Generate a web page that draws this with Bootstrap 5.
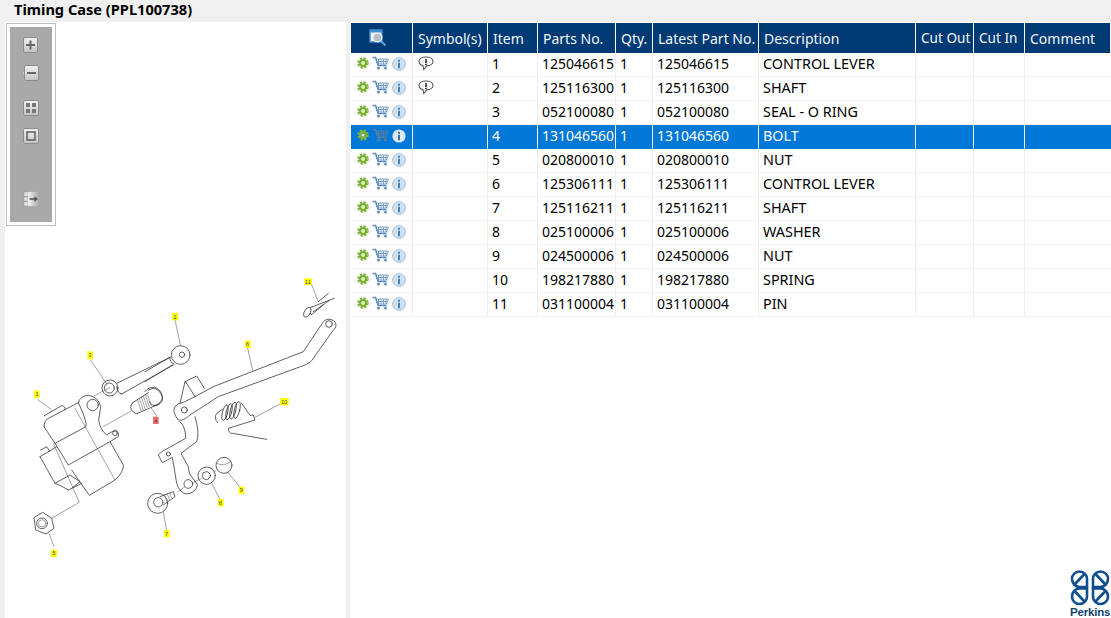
<!DOCTYPE html>
<html lang="en">
<head>
  <meta charset="UTF-8" />
  <title>Timing Case (PPL100738)</title>
  <link href="https://cdn.jsdelivr.net/npm/bootstrap@5.3.0/dist/css/bootstrap.min.css" rel="stylesheet" />
  <style>
    html, body { height: 100%; overflow: hidden; }
    body { background: #f0f0f0; font-family: "Noto Sans", "Open Sans", sans-serif; font-size: 14px; color: #000; }
    .page-wrap { width: 1111px; height: 618px; }
    .title-bar { height: 22px; line-height: 19px; padding-left: 14px; font-weight: 700; font-size: 14.6px; }
    .main-area { height: 596px; padding-left: 5px; }
    .drawing-pane { width: 341px; height: 596px; background: #fff; margin-right: 4px; position: relative; }
    .drawing-pane svg.drawing { display: block; filter: blur(.3px); }
    .zoom-tools { position: absolute; left: 1px; top: 1px; width: 50px; height: 203px; border: 1px solid #bdbdbd; background: #fff; padding: 3px; }
    .zoom-inner { background: #a9a9a9; height: 100%; padding-top: 10px; }
    .tool-btn { width: 16px; height: 16px; display: block; }
    .gap-a { margin-top: 12px; }
    .gap-b { margin-top: 19px; }
    .gap-c { margin-top: 47px; }
    .parts-pane { background: #fff; padding: 1px 0 0 1px; }
    .parts-table { table-layout: fixed; width: 760px; margin: 0; border-collapse: separate; border-spacing: 0; font-size: 14px; }
    .parts-table > thead > tr > th { --bs-table-bg: #003a75; --bs-table-color: #f2f6fa; background: #003a75; color: #f2f6fa; height: 30px; padding: 0 0 0 5px; font-weight: 400; border: 0; border-right: 1px solid #fff; vertical-align: middle; white-space: nowrap; overflow: hidden; }
    .parts-table > thead > tr > th.head-find { padding: 0 0 0 18px; }
    .parts-table > thead > tr > th.head-tight { font-size: 13.6px; }
    .parts-table > tbody > tr > td { height: 24px; padding: 0 0 2px 4px; border: 0; border-right: 1px solid #f0f0f0; border-bottom: 1px solid #f0f0f0; vertical-align: middle; white-space: nowrap; overflow: hidden; line-height: 20px; color: #000; box-shadow: none; }
    .parts-table > tbody > tr.row-sel > td { --bs-table-bg: #0078d7; background: #0078d7; color: #fff; border-right-color: #fff; border-bottom-color: #0078d7; }
    .parts-table > tbody > tr > th:last-child, .parts-table > tbody > tr > td:last-child { border-right: 0; }
    .parts-table > tbody > tr > td.cell-icons { padding: 0 0 1px 6px; line-height: 0; color: #5b8dba; }
    .parts-table > tbody > tr.row-sel > td.cell-icons { color: #5d7ea2; }
    .cell-icons svg { display: inline-block; vertical-align: top; }
    .cell-icons .ic-cart { margin: -1px 3px 0 3px; }
    .parts-table > tbody > tr > td.cell-sym { padding: 3px 0 0 5px; vertical-align: top; line-height: 0; }
    .parts-table > tbody > tr > td.cell-desc { font-size: 14.4px; }
    .brand-logo { width: 42px; height: 49px; margin: 0 0 0 auto; }
    .brand-name { font-family: "Liberation Sans", Arial, sans-serif; font-weight: 700; font-size: 11.5px; letter-spacing: -.2px; fill: #123f73; }
    .ln { fill: none; stroke: #3a3a3a; stroke-width: 2.4; stroke-linejoin: round; stroke-linecap: round; }
    .fine { fill: none; stroke: #555; stroke-width: 1.6; }
    .ld { fill: none; stroke: #8a8a8a; stroke-width: 2.4; }
    .tag { fill: #ffff00; }
    .tag-sel { fill: #ee6d6d; }
    .tag-txt { font-family: "Liberation Sans", Arial, sans-serif; font-size: 17px; fill: #444; text-anchor: middle; }
  </style>
</head>
<body>
  <svg width="0" height="0" class="position-absolute">
    <symbol id="ic-gear" viewBox="0 0 12 12">
      <circle cx="6" cy="6" r="4.7" fill="none" stroke="#7cb23c" stroke-width="2.2" stroke-dasharray="2.2 1.5"/>
      <circle cx="6" cy="6" r="3" fill="none" stroke="#7cb23c" stroke-width="2.6"/>
      <circle cx="6" cy="6" r="1.6" fill="#dbe9c6"/>
    </symbol>
    <symbol id="ic-cart" viewBox="0 0 17 14">
      <path d="M.5 1.5H3.5L6 9.5H14.5" fill="none" stroke="currentColor" stroke-width="1.3"/>
      <path d="M4 3H16.5L14.7 8H5.6ZM6.5 3V8M9 3V8M11.5 3V8M14 3V8M4.7 5.5H15.6" fill="none" stroke="currentColor" stroke-width=".8"/>
      <circle cx="6.5" cy="12" r="1.5" fill="currentColor"/>
      <circle cx="13.5" cy="12" r="1.5" fill="currentColor"/>
    </symbol>
    <symbol id="ic-info" viewBox="0 0 14 14">
      <circle cx="7" cy="7" r="6.4" fill="#cfe0f0" stroke="#a5c0da" stroke-width="1"/>
      <rect x="6" y="2.8" width="2" height="2" fill="#4f7fb0"/>
      <rect x="6" y="5.8" width="2" height="5.4" fill="#4f7fb0"/>
    </symbol>
    <symbol id="ic-info-sel" viewBox="0 0 14 14">
      <circle cx="7" cy="7" r="6.6" fill="#dbe7f3"/>
      <rect x="6" y="2.8" width="2" height="2" fill="#3f70a3"/>
      <rect x="6" y="5.8" width="2" height="5.4" fill="#3f70a3"/>
    </symbol>
    <symbol id="ic-note" viewBox="0 0 16 15">
      <path d="M8 1C4 1 1 2.8 1 5.500C1 7.600 2.800 9.100 5 9.600L5.800 13.500L8.600 9.900C12.200 9.800 15 8 15 5.500C15 2.800 12 1 8 1Z" fill="none" stroke="#555" stroke-width="1.1"/>
      <path d="M8 3V7.200M8 8V9" stroke="#222" stroke-width="1.6"/>
    </symbol>
    <linearGradient id="btn-grad" x1="0" y1="0" x2="0" y2="1">
      <stop offset="0" stop-color="#f2f2f2"/><stop offset="1" stop-color="#c4c4c4"/>
    </linearGradient>
    <linearGradient id="side-grad" x1="0" y1="0" x2="1" y2="0">
      <stop offset="0" stop-color="#f4f4f4"/><stop offset="1" stop-color="#a9a9a9"/>
    </linearGradient>
  </svg>

  <div class="page-wrap d-flex flex-column">
    <div class="title-bar">Timing Case (PPL100738)</div>
    <div class="main-area d-flex">
      <div class="drawing-pane">
        <svg class="drawing" width="341" height="596" viewBox="5 22 341 596">
          <!-- left half, numbers are pixels of the 3x crop -->
          <g transform="translate(0,270) scale(.33333)">
            <path class="ld" d="M112 388L158 422M272 270L322 345M282 378L330 352M225 415L345 630M310 470L395 422M470 438L452 412M162 830L147 790M155 745L238 697L160 520"/>
            <path class="ln" d="M133 437L185 407Q197 408 195 420M132 470Q132 452 145 445L235 398Q240 378 265 376Q295 380 302 410L296 450Q300 480 320 495L345 480Q358 485 355 500L330 515L370 585Q372 605 345 630L268 676L215 600"/>
            <path class="ln" d="M132 470L165 520L258 470Q262 455 235 398M165 520L205 585L330 515M120 560L170 530M120 560L165 640L210 615L240 635L215 655L205 660Q190 650 165 640M122 540L140 530L150 545M215 655L245 640"/>
            <circle class="ln" cx="278" cy="405" r="17"/>
            <circle class="ln" cx="345" cy="490" r="7"/>
            <circle class="ln" cx="330" cy="354" r="24"/>
            <circle class="ln" cx="328" cy="354" r="15"/>
            <path class="ln" d="M350 340L510 262M365 372L520 285M350 350Q352 370 365 372"/>
            <path class="ln" d="M398 398L445 368M412 430L478 402M398 398Q385 412 400 426Q405 432 412 430"/>
            <path class="fine" d="M412 388L424 424M418 385L430 421M424 381L436 418M430 378L442 414M436 374L448 411M442 371L454 408"/>
            <path class="ln" d="M445 360Q470 345 485 375Q495 395 472 405Q455 410 448 395"/>
            <path class="ln" d="M103 742L128 727L155 745L162 775L138 792L108 780Z"/>
            <circle class="ln" cx="126" cy="760" r="16"/>
            <circle class="fine" cx="126" cy="760" r="11"/>
            <rect class="tag" x="102" y="361" width="16" height="23"/><text class="tag-txt" x="111" y="379">1</text>
            <rect class="tag" x="262" y="244" width="17" height="24"/><text class="tag-txt" x="270" y="262">3</text>
            <rect class="tag-sel" x="459" y="440" width="17" height="22"/><text class="tag-txt" x="468" y="458">4</text>
            <rect class="tag" x="153" y="839" width="18" height="22"/><text class="tag-txt" x="162" y="856">5</text>
          </g>
          <!-- right half -->
          <g transform="translate(145,270) scale(.33333)">
            <path class="ld" d="M90 150L107 228M308 234L323 302M330 442L405 402M500 45L520 95M55 725L65 782M200 640L226 690M247 605L285 652M100 665L120 650M140 640L170 625M205 608L215 600"/>
            <circle class="ln" cx="107" cy="255" r="28"/>
            <circle class="ln" cx="111" cy="254" r="8"/>
            <path class="ln" d="M0 305L75 262M0 335L82 285M75 262Q72 275 88 283"/>
            <path class="ln" d="M150 380L205 350L475 245L535 155Q550 140 570 155Q578 170 565 180L500 272Q492 280 480 285L220 380L135 435Q112 455 100 450Q80 425 90 410Q98 400 115 397L150 380"/>
            <path class="ln" d="M120 335L155 318L178 355M120 335L105 400M122 335L150 380"/>
            <circle class="ln" cx="118" cy="420" r="9"/>
            <circle class="ln" cx="552" cy="162" r="10"/>
            <path class="ln" d="M105 455Q122 470 122 505L50 545L40 555L52 578L82 562L95 640Q105 670 125 672Q150 670 158 645L133 610L130 590L108 550L155 515Q165 490 150 440"/>
            <circle class="ln" cx="130" cy="642" r="13"/>
            <circle class="ln" cx="70" cy="552" r="6"/>
            <circle class="ln" cx="38" cy="700" r="30"/>
            <circle class="ln" cx="40" cy="697" r="14"/>
            <path class="ln" d="M45 680L85 665L90 680L55 705"/>
            <path class="fine" d="M58 672L66 694M66 670L74 690M74 667L80 685"/>
            <circle class="ln" cx="185" cy="617" r="26"/>
            <circle class="ln" cx="184" cy="617" r="12"/>
            <circle class="ln" cx="237" cy="586" r="24"/>
            <path class="fine" d="M215 580Q235 590 258 575"/>
            <ellipse class="ln" cx="240" cy="428" rx="8" ry="24" transform="rotate(14 240 428)"/>
            <ellipse class="ln" cx="252" cy="425" rx="8" ry="25" transform="rotate(14 252 425)"/>
            <ellipse class="ln" cx="264" cy="422" rx="8" ry="26" transform="rotate(14 264 422)"/>
            <ellipse class="ln" cx="276" cy="420" rx="8" ry="26" transform="rotate(14 276 420)"/>
            <path class="ln" d="M232 418L215 430Q205 445 218 458M290 400L315 436L325 435L330 450L250 475Q250 490 262 490L365 508"/>
            <ellipse class="ln" cx="487" cy="127" rx="9" ry="16" transform="rotate(30 487 127)"/>
            <path class="ln" d="M495 113L568 85M505 125L552 92M498 135L535 105M520 95L550 70"/>
            <path class="ln" d="M0 365Q10 350 30 352Q52 360 52 385Q45 405 25 408" />
            <rect class="tag" x="81" y="129" width="19" height="22"/><text class="tag-txt" x="90" y="146">2</text>
            <rect class="tag" x="300" y="212" width="17" height="22"/><text class="tag-txt" x="308" y="229">6</text>
            <rect class="tag" x="57" y="780" width="17" height="22"/><text class="tag-txt" x="65" y="797">7</text>
            <rect class="tag" x="219" y="687" width="17" height="22"/><text class="tag-txt" x="227" y="704">8</text>
            <rect class="tag" x="281" y="650" width="17" height="22"/><text class="tag-txt" x="289" y="667">9</text>
            <rect class="tag" x="405" y="384" width="26" height="22"/><text class="tag-txt" x="418" y="401">10</text>
            <rect class="tag" x="478" y="25" width="23" height="20"/><text class="tag-txt" x="489" y="41">11</text>
          </g>
        </svg>
        <div class="zoom-tools">
          <div class="zoom-inner d-flex flex-column align-items-center">
            <svg class="tool-btn" viewBox="0 0 16 16"><rect x=".5" y=".5" width="14" height="15" rx="1.5" fill="url(#btn-grad)" stroke="#8c8c8c"/><path d="M15 7L16 8L15 9Z" fill="#ddd"/><path d="M7.500 3.500V12.500M3 8H12" stroke="#666" stroke-width="2"/></svg>
            <svg class="tool-btn gap-a" viewBox="0 0 16 16"><rect x="1.500" y=".5" width="14" height="15" rx="1.500" fill="url(#btn-grad)" stroke="#8c8c8c"/><path d="M1 7L0 8L1 9Z" fill="#ddd"/><path d="M4 8H13" stroke="#666" stroke-width="2"/></svg>
            <svg class="tool-btn gap-b" viewBox="0 0 16 16"><rect x=".5" y=".5" width="15" height="15" rx="1.500" fill="url(#btn-grad)" stroke="#8c8c8c"/><path d="M3 3H7V7H3ZM9 3H13V7H9ZM3 9H7V13H3ZM9 9H13V13H9Z" fill="#777"/></svg>
            <svg class="tool-btn gap-a" viewBox="0 0 16 16"><rect x=".5" y=".5" width="15" height="15" rx="1.500" fill="url(#btn-grad)" stroke="#8c8c8c"/><rect x="4" y="4" width="8" height="8" fill="none" stroke="#666" stroke-width="1.6"/></svg>
            <svg class="tool-btn gap-c" viewBox="0 0 17 16"><path d="M1 .5H5V15.500H1Z" fill="#e2e2e2" stroke="#999" stroke-width=".6"/><path d="M1 5.500H5M1 10.500H5" stroke="#8c8c8c"/><path d="M5 .5H17V15.500H5Z" fill="url(#side-grad)"/><path d="M7 8H13" stroke="#555" stroke-width="1.6"/><path d="M12 5L16 8L12 11Z" fill="#555"/></svg>
          </div>
        </div>
      </div>
      <div class="parts-pane flex-grow-1 d-flex flex-column">
        <table class="table parts-table">
          <colgroup>
            <col style="width:62px"><col style="width:75px"><col style="width:50px"><col style="width:78px"><col style="width:37px"><col style="width:106px"><col style="width:157px"><col style="width:58px"><col style="width:51px"><col style="width:86px">
          </colgroup>
          <thead>
            <tr>
              <th class="head-find">
                <svg class="d-block" width="18" height="18" viewBox="0 0 18 18"><rect x="1" y="1" width="12" height="12" fill="#e8f0f8" stroke="#3f8fd0" stroke-width="1.4"/><rect x="1" y="1" width="12" height="2.500" fill="#3f8fd0"/><circle cx="8.500" cy="8.500" r="4.400" fill="#b9bec4" stroke="#e9edf1" stroke-width="1.2"/><path d="M12 12L16.500 16.500" stroke="#5aa0d8" stroke-width="2.2"/></svg>
              </th>
              <th>Symbol(s)</th><th>Item</th><th>Parts No.</th><th>Qty.</th><th>Latest Part No.</th><th>Description</th><th class="head-tight">Cut Out</th><th class="head-tight">Cut In</th><th>Comment</th>
            </tr>
          </thead>
          <tbody>
            <tr><td class="cell-icons"><svg width="12" height="12"><use href="#ic-gear"/></svg><svg class="ic-cart" width="17" height="14"><use href="#ic-cart"/></svg><svg width="14" height="14"><use href="#ic-info"/></svg></td><td class="cell-sym"><svg width="16" height="15"><use href="#ic-note"/></svg></td><td>1</td><td>125046615</td><td>1</td><td>125046615</td><td class="cell-desc">CONTROL LEVER</td><td></td><td></td><td></td></tr>
            <tr><td class="cell-icons"><svg width="12" height="12"><use href="#ic-gear"/></svg><svg class="ic-cart" width="17" height="14"><use href="#ic-cart"/></svg><svg width="14" height="14"><use href="#ic-info"/></svg></td><td class="cell-sym"><svg width="16" height="15"><use href="#ic-note"/></svg></td><td>2</td><td>125116300</td><td>1</td><td>125116300</td><td class="cell-desc">SHAFT</td><td></td><td></td><td></td></tr>
            <tr><td class="cell-icons"><svg width="12" height="12"><use href="#ic-gear"/></svg><svg class="ic-cart" width="17" height="14"><use href="#ic-cart"/></svg><svg width="14" height="14"><use href="#ic-info"/></svg></td><td></td><td>3</td><td>052100080</td><td>1</td><td>052100080</td><td class="cell-desc">SEAL - O RING</td><td></td><td></td><td></td></tr>
            <tr class="row-sel"><td class="cell-icons"><svg width="12" height="12"><use href="#ic-gear"/></svg><svg class="ic-cart" width="17" height="14"><use href="#ic-cart"/></svg><svg width="14" height="14"><use href="#ic-info-sel"/></svg></td><td></td><td>4</td><td>131046560</td><td>1</td><td>131046560</td><td class="cell-desc">BOLT</td><td></td><td></td><td></td></tr>
            <tr><td class="cell-icons"><svg width="12" height="12"><use href="#ic-gear"/></svg><svg class="ic-cart" width="17" height="14"><use href="#ic-cart"/></svg><svg width="14" height="14"><use href="#ic-info"/></svg></td><td></td><td>5</td><td>020800010</td><td>1</td><td>020800010</td><td class="cell-desc">NUT</td><td></td><td></td><td></td></tr>
            <tr><td class="cell-icons"><svg width="12" height="12"><use href="#ic-gear"/></svg><svg class="ic-cart" width="17" height="14"><use href="#ic-cart"/></svg><svg width="14" height="14"><use href="#ic-info"/></svg></td><td></td><td>6</td><td>125306111</td><td>1</td><td>125306111</td><td class="cell-desc">CONTROL LEVER</td><td></td><td></td><td></td></tr>
            <tr><td class="cell-icons"><svg width="12" height="12"><use href="#ic-gear"/></svg><svg class="ic-cart" width="17" height="14"><use href="#ic-cart"/></svg><svg width="14" height="14"><use href="#ic-info"/></svg></td><td></td><td>7</td><td>125116211</td><td>1</td><td>125116211</td><td class="cell-desc">SHAFT</td><td></td><td></td><td></td></tr>
            <tr><td class="cell-icons"><svg width="12" height="12"><use href="#ic-gear"/></svg><svg class="ic-cart" width="17" height="14"><use href="#ic-cart"/></svg><svg width="14" height="14"><use href="#ic-info"/></svg></td><td></td><td>8</td><td>025100006</td><td>1</td><td>025100006</td><td class="cell-desc">WASHER</td><td></td><td></td><td></td></tr>
            <tr><td class="cell-icons"><svg width="12" height="12"><use href="#ic-gear"/></svg><svg class="ic-cart" width="17" height="14"><use href="#ic-cart"/></svg><svg width="14" height="14"><use href="#ic-info"/></svg></td><td></td><td>9</td><td>024500006</td><td>1</td><td>024500006</td><td class="cell-desc">NUT</td><td></td><td></td><td></td></tr>
            <tr><td class="cell-icons"><svg width="12" height="12"><use href="#ic-gear"/></svg><svg class="ic-cart" width="17" height="14"><use href="#ic-cart"/></svg><svg width="14" height="14"><use href="#ic-info"/></svg></td><td></td><td>10</td><td>198217880</td><td>1</td><td>198217880</td><td class="cell-desc">SPRING</td><td></td><td></td><td></td></tr>
            <tr><td class="cell-icons"><svg width="12" height="12"><use href="#ic-gear"/></svg><svg class="ic-cart" width="17" height="14"><use href="#ic-cart"/></svg><svg width="14" height="14"><use href="#ic-info"/></svg></td><td></td><td>11</td><td>031100004</td><td>1</td><td>031100004</td><td class="cell-desc">PIN</td><td></td><td></td><td></td></tr>
          </tbody>
        </table>
        <svg class="brand-logo mt-auto flex-shrink-0" viewBox="0 0 42 49">
          <g fill="none" stroke="#0f4f8f" stroke-width="2.6">
            <g id="logo-lobe"><path d="M18 18V10A7.500 7.500 0 0 0 10.500 2.500A7.500 7.500 0 0 0 3 10A8 8 0 0 0 10.500 18Z"/><path d="M6 15L15.500 5"/></g>
            <use href="#logo-lobe" transform="matrix(-1 0 0 1 42 0)"/>
            <use href="#logo-lobe" transform="matrix(1 0 0 -1 0 37.500)"/>
            <use href="#logo-lobe" transform="matrix(-1 0 0 -1 42 37.500)"/>
          </g>
          <text class="brand-name" x="1" y="47">Perkins</text>
        </svg>
      </div>
    </div>
  </div>
  <script src="https://cdn.jsdelivr.net/npm/bootstrap@5.3.0/dist/js/bootstrap.bundle.min.js"></script>
</body>
</html>
